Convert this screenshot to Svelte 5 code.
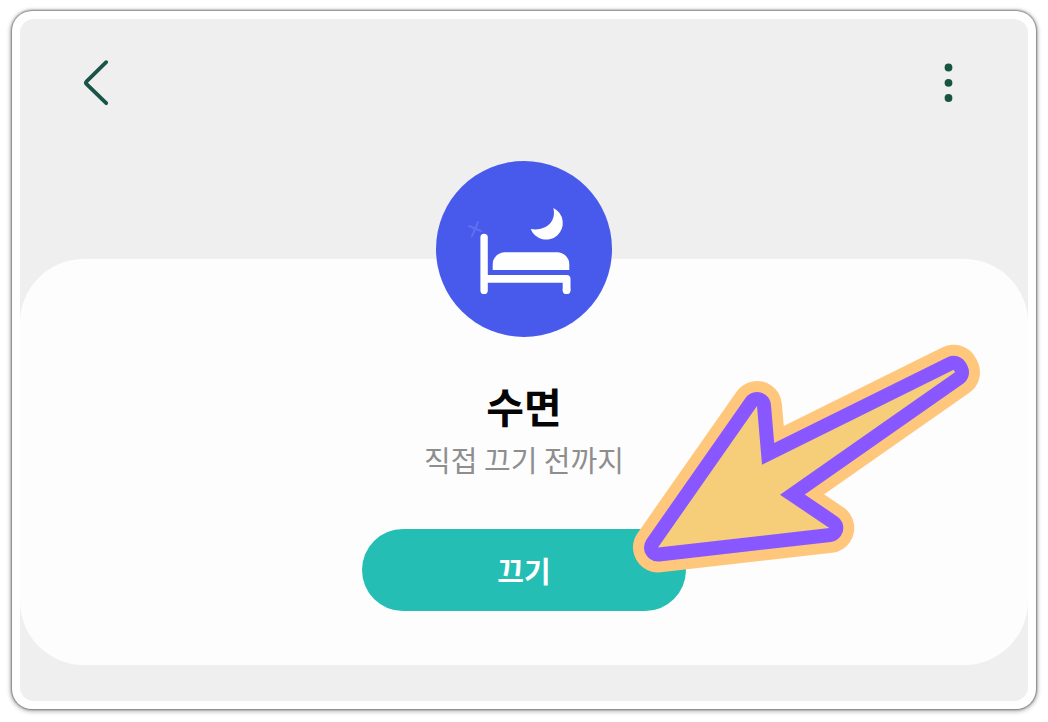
<script>
  const title = '수면';
  const status = '직접 끄기 전까지';
  const action = '끄기';
  const pointer = 'M28 205.5 L127 64 L132 122.7 L323.7 27.7 L325 30.3 L150 152.7 L199.3 186 Z';
</script>

<main class="frame">
  <div class="screen">
    <header class="bar">
      <button class="icon" aria-label="뒤로">
        <svg width="48" height="48" viewBox="0 0 48 48" fill="none" stroke="#1a5347" stroke-width="3.8" stroke-linecap="round" stroke-linejoin="round" aria-hidden="true">
          <path d="M34.2 3.2 L14.6 22.4 Q13.2 23.8 14.6 25.2 L34.2 44.2" />
        </svg>
      </button>
      <button class="icon" aria-label="더보기">
        <svg width="48" height="48" viewBox="0 0 48 48" fill="#17553f" aria-hidden="true">
          <circle cx="24.5" cy="8.5" r="3.9" />
          <circle cx="24.5" cy="23.8" r="3.9" />
          <circle cx="24.5" cy="39" r="3.9" />
        </svg>
      </button>
    </header>

    <section class="card">
      <svg class="badge" viewBox="0 0 176 176" aria-hidden="true">
        <circle cx="88" cy="88" r="88" fill="#485aec" />
        <path d="M33 65 L45 70 M42 61 L36 75" stroke="#5f6ff0" stroke-width="2" stroke-linecap="round" />
        <path d="M117.3 47 A16.6 16.6 0 1 1 94.7 68 C109 70.5 121 61 117.3 47 Z" fill="#fff" />
        <path d="M56.7 109 V103.5 A12.2 12.2 0 0 1 68.9 91.3 H121.1 A12.2 12.2 0 0 1 133.3 103.5 V109 Z" fill="#fff" />
        <path d="M48.1 76.4 V129.4" stroke="#fff" stroke-width="7.4" stroke-linecap="round" />
        <path d="M48.1 117.8 H130.6 V129.2" fill="none" stroke="#fff" stroke-width="7.8" stroke-linejoin="round" />
        <circle cx="130.6" cy="129.2" r="3.9" fill="#fff" />
      </svg>
      <h1>{title}</h1>
      <p>{status}</p>
      <button class="action">{action}</button>

      <svg class="arrow" viewBox="0 0 352 232" aria-hidden="true">
        <g stroke-linejoin="round">
          <path d={pointer} fill="#ffc77c" stroke="#ffc77c" stroke-width="50" />
          <path d={pointer} fill="#8957ff" stroke="#8957ff" stroke-width="28" />
          <path d={pointer} fill="#f6ce7a" />
        </g>
      </svg>
    </section>
  </div>
</main>

<style>
  :global(body) {
    margin: 0;
    background: #fff;
  }

  .frame {
    margin: 11px 12px 12px;
    padding: 8px;
    border-radius: 20px;
    background: #fff;
    box-shadow: 0 0 2px 1px rgba(0, 0, 0, 0.4), 0 1px 4px 2px rgba(0, 0, 0, 0.24);
    font-family: "Noto Sans CJK KR", sans-serif;
  }

  .screen {
    padding-bottom: 36px;
    border-radius: 14px;
    background: #efefef;
    overflow: hidden;
  }

  .bar {
    display: flex;
    justify-content: space-between;
    padding: 40px 56px 152px 52px;
  }

  button {
    margin: 0;
    padding: 0;
    border: 0;
    font: inherit;
    cursor: pointer;
  }

  .icon {
    width: 48px;
    height: 48px;
    background: none;
  }

  .icon svg {
    display: block;
  }

  .card {
    position: relative;
    display: flex;
    flex-direction: column;
    align-items: center;
    padding-bottom: 54px;
    border-radius: 64px;
    background: #fdfdfd;
  }

  .badge {
    width: 176px;
    height: 176px;
    margin-top: -98px;
  }

  h1 {
    margin: 40px 0 0;
    font-size: 41px;
    line-height: 56px;
    font-weight: 700;
    color: #050505;
  }

  p {
    margin: 4px 0 0;
    font-size: 29px;
    line-height: 44px;
    font-weight: 400;
    color: #8e8e8e;
  }

  .action {
    width: 324px;
    max-width: 80%;
    height: 82px;
    margin-top: 48px;
    border-radius: 41px;
    background: #25beb4;
    color: #fff;
    font-size: 29px;
    font-weight: 700;
  }

  .arrow {
    position: absolute;
    top: 83px;
    left: calc(50% + 106px);
    width: 352px;
    height: 232px;
    pointer-events: none;
  }
</style>
